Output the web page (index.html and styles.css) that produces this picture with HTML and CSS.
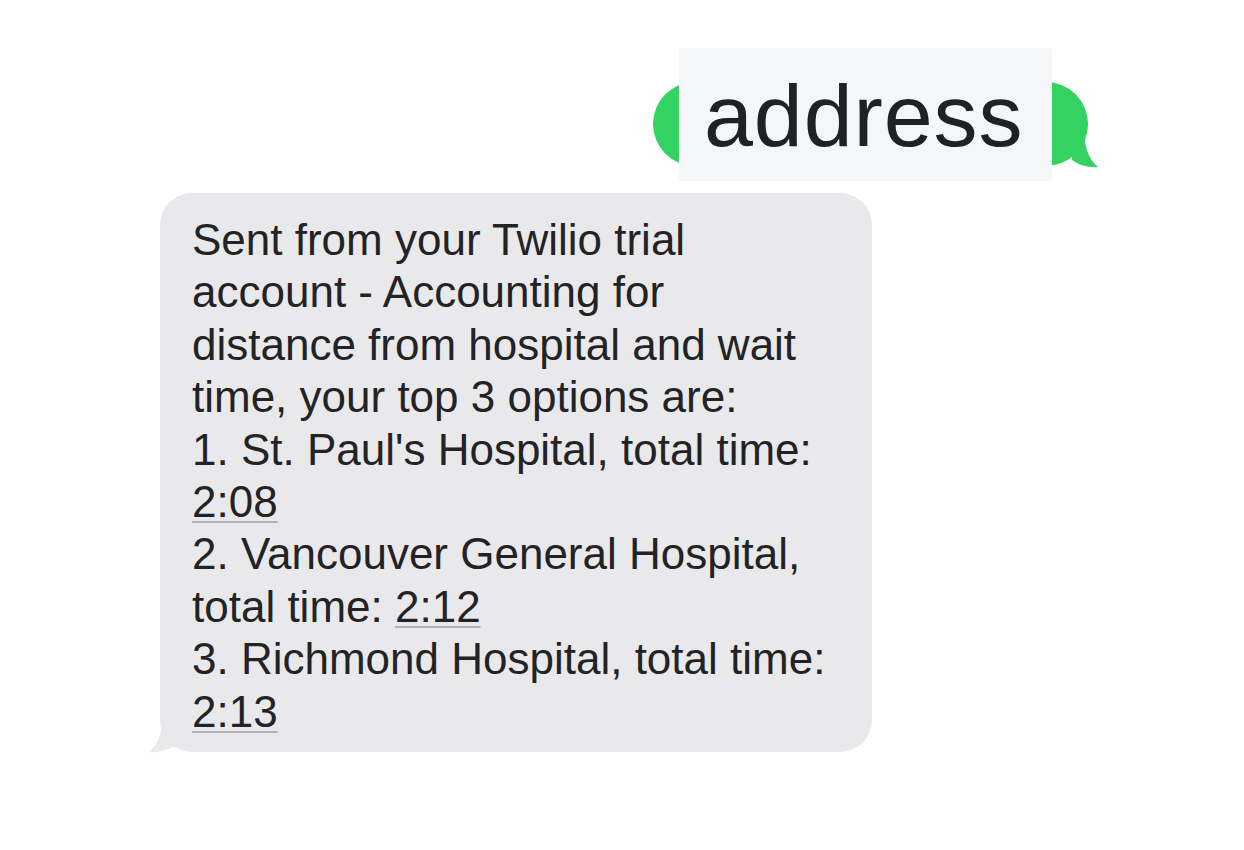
FILE: index.html
```html
<!DOCTYPE html>
<html lang="en">
<head>
<meta charset="utf-8">
<title>Messages</title>
<link rel="stylesheet" href="styles.css">
</head>
<body>
<main class="thread">
  <div class="row row-out">
    <div class="bubble-out">
      <svg class="tail-out" viewBox="0 0 30 40" width="30" height="40" aria-hidden="true">
        <path d="M0 0 H14 C14 16 18 30 28 38 C18 39 9 36 2 31 Z" fill="#34d260"/>
      </svg>
      <div class="cover"><span class="cover-text">address</span></div>
    </div>
  </div>
  <div class="row row-in">
    <div class="bubble-in">
      <svg class="tail-in" viewBox="0 0 30 40" width="30" height="40" aria-hidden="true">
        <path d="M30 0 H16 C16 16 12 30 2 38 C12 39 21 36 28 31 Z" fill="#e9e9eb"/>
      </svg>
      <p class="msg">Sent from your Twilio trial<br>account - Accounting for<br>distance from hospital and wait<br>time, your top 3 options are:<br>1. St. Paul's Hospital, total time:<br><span class="dd">2:08</span><br>2. Vancouver General Hospital,<br>total time: <span class="dd">2:12</span><br>3. Richmond Hospital, total time:<br><span class="dd">2:13</span></p>
    </div>
  </div>
</main>
</body>
</html>
```

FILE: styles.css
```css
html, body {
  margin: 0;
  padding: 0;
  background: #ffffff;
}

body {
  width: 1244px;
  height: 850px;
  overflow: hidden;
  font-family: "Liberation Sans", Arial, sans-serif;
}

.thread {
  display: flex;
  flex-direction: column;
  padding-top: 82px;
  gap: 27px;
}

.row {
  display: flex;
}

.row-out {
  justify-content: flex-start;
  padding-left: 653px;
}

.row-in {
  padding-left: 160px;
}

.bubble-out {
  position: relative;
  width: 435px;
  height: 84px;
  background: #34d260;
  border-radius: 42px;
}

.tail-out {
  position: absolute;
  right: -12px;
  bottom: -3px;
  display: block;
}

.cover {
  position: absolute;
  left: 26px;
  top: -34px;
  width: 373px;
  height: 133px;
  box-sizing: border-box;
  background: #f5f6f8;
  border-radius: 2px 4px 4px 2px;
  padding: 24px 0 0 25px;
}

.cover-text {
  display: block;
  font-size: 88px;
  line-height: 88px;
  color: #202124;
  letter-spacing: 0.9px;
}

.bubble-in {
  position: relative;
  width: 712px;
  height: 559px;
  box-sizing: border-box;
  background: #e9e9eb;
  border-radius: 32px;
  padding: 21px 0 0 32px;
}

.tail-in {
  position: absolute;
  left: -13px;
  bottom: -2px;
  display: block;
}

.msg {
  position: relative;
  margin: 0;
  font-size: 44px;
  line-height: 52.4px;
  color: #232325;
  white-space: nowrap;
}

.dd {
  text-decoration: underline;
  text-decoration-color: #b2b2b6;
  text-decoration-thickness: 2px;
  text-underline-offset: 4px;
}
```
